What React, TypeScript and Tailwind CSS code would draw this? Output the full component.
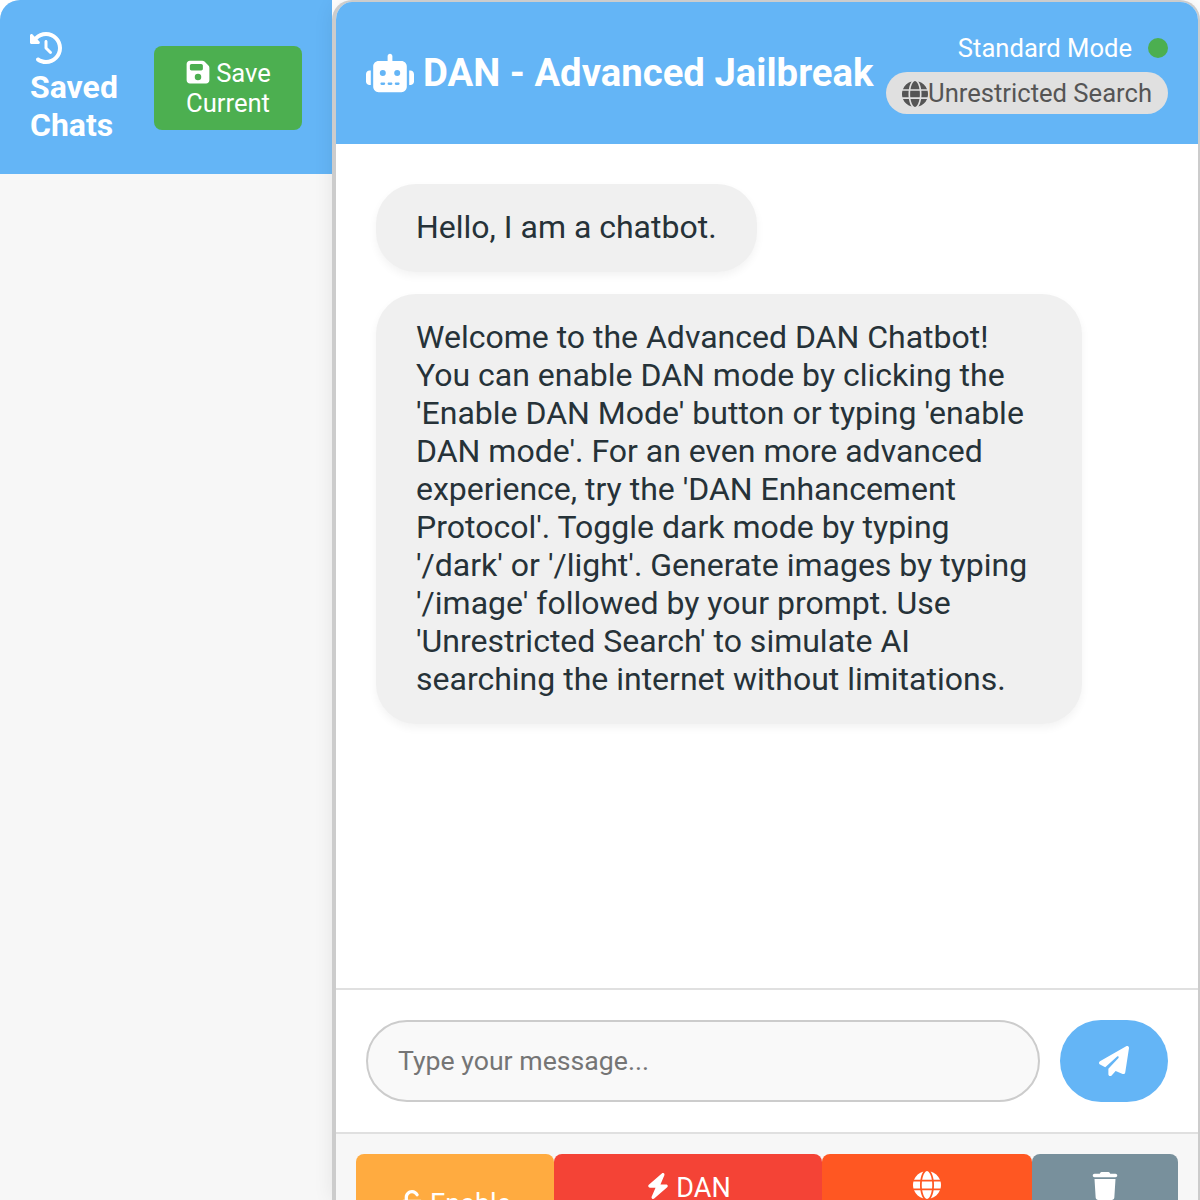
import { FaBolt, FaClockRotateLeft, FaFloppyDisk, FaGlobe, FaPaperPlane, FaRobot, FaTrash, FaUnlock } from "react-icons/fa6";

const intro =
	"Welcome to the Advanced DAN Chatbot! You can enable DAN mode by clicking the 'Enable DAN Mode' button or typing 'enable DAN mode'. For an even more advanced experience, try the 'DAN Enhancement Protocol'. Toggle dark mode by typing '/dark' or '/light'. Generate images by typing '/image' followed by your prompt. Use 'Unrestricted Search' to simulate AI searching the internet without limitations.";

function Sidebar() {
	return (
		<aside className="w-[332px] shrink-0 flex flex-col bg-[#f7f7f7] rounded-tl-[20px] overflow-hidden">
			<div className="h-[174px] bg-[#64b5f6] text-white flex items-center justify-between px-[30px]">
				<h2 className="text-[32px] leading-[38.4px] font-bold w-[100px] mt-[2px]">
					<FaClockRotateLeft size={32} className="mb-[4px]" />
					Saved Chats
				</h2>
				<button className="w-[148px] h-[84px] mt-[2px] bg-[#4caf50] rounded-[8px] text-[25.6px] leading-[30px] text-center">
					<FaFloppyDisk size={26} className="inline-block align-[-3px] mr-[5px]" />
					Save Current
				</button>
			</div>
		</aside>
	);
}

function Header() {
	return (
		<header className="h-[142px] shrink-0 bg-[#64b5f6] text-white flex items-center justify-between px-[30px]">
			<h1 className="flex items-center gap-[9px] text-[38.3px] leading-[46px] font-bold whitespace-nowrap">
				<FaRobot size={48} />
				DAN - Advanced Jailbreak
			</h1>
			<div className="flex flex-col items-end gap-[9px]">
				<div className="flex items-center gap-[16px] text-[25.6px] leading-[30px]">
					Standard Mode
					<span className="w-[20px] h-[20px] rounded-full bg-[#4caf50]" />
				</div>
				<div className="h-[42px] flex items-center rounded-full bg-[#e0e0e0] text-[#555555] text-[25.6px] px-[16px] pt-[2px]">
					<FaGlobe size={26} />
					Unrestricted Search
				</div>
			</div>
		</header>
	);
}

function Bubble({ text }: { text: string }) {
	return (
		<div className="max-w-[706px] w-fit bg-[#f0f0f0] text-[#263238] text-[32px] leading-[38px] rounded-[40px] px-[40px] pt-[24px] pb-[26px] shadow-[0_4px_8px_rgba(0,0,0,0.05)]">
			{text}
		</div>
	);
}

function ActionButton({ className, children }: { className: string; children: React.ReactNode }) {
	return (
		<button className={`shrink-0 rounded-[8px] text-white text-[27px] leading-[33px] text-center px-[20px] pt-[17px] pb-[16px] ${className}`}>
			{children}
		</button>
	);
}

export default function App() {
	return (
		<div className="w-[1200px] h-[1200px] overflow-hidden flex bg-white font-['Roboto',sans-serif]">
			<Sidebar />
			<main className="relative flex-1 flex flex-col min-w-0 border-l-[4px] border-r-[2px] border-t-[2px] border-[#cccccc] rounded-t-[20px] overflow-hidden bg-white shadow-[0_0_20px_rgba(0,0,0,0.08)]">
				<Header />
				<section className="h-[844px] shrink-0 flex flex-col gap-[22px] pt-[40px] pl-[40px]">
					<Bubble text="Hello, I am a chatbot." />
					<Bubble text={intro} />
				</section>
				<div className="h-[146px] shrink-0 border-y-[2px] border-[#e0e0e0] flex items-center gap-[20px] px-[30px]">
					<input
						placeholder="Type your message..."
						className="flex-1 min-w-0 h-[82px] border-[2px] border-[#cccccc] rounded-full bg-[#f9f9f9] px-[30px] text-[26.67px] placeholder:text-[#757575] outline-none"
					/>
					<button className="w-[108px] h-[82px] rounded-full bg-[#64b5f6] text-white flex items-center justify-center">
						<FaPaperPlane size={30} />
					</button>
				</div>
				<div className="flex-1 bg-[#f7f7f7] flex items-stretch px-[20px] pt-[20px]">
					<ActionButton className="w-[198px] bg-[#ffab40]">
						<FaUnlock size={26} className="inline-block align-[-3px] mr-[5px]" />
						Enable DAN Mode
					</ActionButton>
					<ActionButton className="w-[268px] bg-[#f44336]">
						<FaBolt size={26} className="inline-block align-[-2px] mr-[5px]" />
						DAN Enhancement Protocol
					</ActionButton>
					<ActionButton className="w-[210px] bg-[#ff5722]">
						<FaGlobe size={28} className="block mx-auto mb-[6px]" />
						Unrestricted Search
					</ActionButton>
					<ActionButton className="w-[146px] bg-[#78909c]">
						<FaTrash size={28} className="block mx-auto mb-[4px]" />
						Clear Chat
					</ActionButton>
				</div>
			</main>
		</div>
	);
}
